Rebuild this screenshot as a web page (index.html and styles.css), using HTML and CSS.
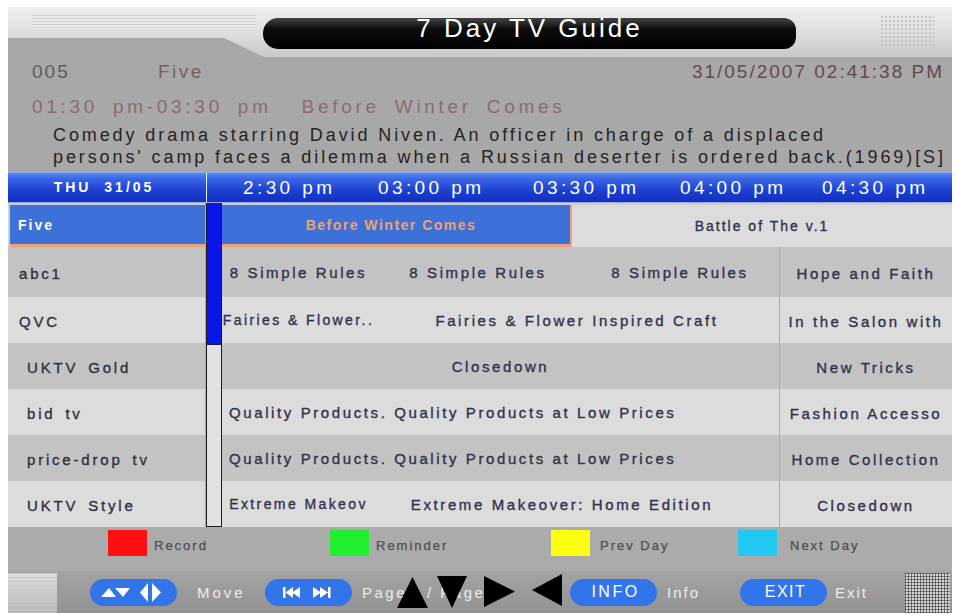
FILE: index.html
```html
<!DOCTYPE html>
<html lang="en">
<head>
<meta charset="utf-8">
<title>7 Day TV Guide</title>
<link rel="stylesheet" href="styles.css">
</head>
<body>
<div class="screen">
  <header class="top">
    <div class="top-lines"></div>
    <div class="top-cut"></div>
    <div class="top-dots"></div>
    <div class="title">7 Day TV Guide</div>
  </header>

  <section class="info">
    <div class="info-head">
      <span class="ch-num">005</span>
      <span class="ch-name">Five</span>
      <span class="clock">31/05/2007 02:41:38 PM</span>
    </div>
    <div class="prog-title">01:30 pm-03:30 pm&nbsp; Before Winter Comes</div>
    <div class="desc">Comedy drama starring David Niven. An officer in charge of a displaced<br>persons' camp faces a dilemma when a Russian deserter is ordered back.(1969)[S]</div>
  </section>

  <div class="timebar">
    <div class="day">THU 31/05</div>
    <div class="sep"></div>
    <div class="times">
      <span>2:30 pm</span>
      <span>03:00 pm</span>
      <span>03:30 pm</span>
      <span>04:00 pm</span>
      <span>04:30 pm</span>
    </div>
  </div>

  <div class="guide">
    <div class="channels">
      <div class="row first"><div class="ch-sel">Five</div></div>
      <div class="row tall dark ch">abc1</div>
      <div class="row light ch">QVC</div>
      <div class="row dark ch in">UKTV Gold</div>
      <div class="row light ch in">bid tv</div>
      <div class="row dark ch in">price-drop tv</div>
      <div class="row light ch in">UKTV Style</div>
    </div>

    <div class="scroll">
      <div class="track"><div class="thumb"></div></div>
    </div>

    <div class="programs">
      <div class="row first">
        <div class="cell on" style="width:350px">Before Winter Comes</div>
        <div class="cell light small" style="width:380px">Battle of The v.1</div>
      </div>
      <div class="row tall dark">
        <div class="cell" style="width:153px">8 Simple Rules</div>
        <div class="cell" style="width:206px">8 Simple Rules</div>
        <div class="cell" style="width:198px">8 Simple Rules</div>
        <div class="cell split" style="width:173px">Hope and Faith</div>
      </div>
      <div class="row light">
        <div class="cell narrow" style="width:153px">Fairies &amp; Flower..</div>
        <div class="cell" style="width:404px">Fairies &amp; Flower Inspired Craft</div>
        <div class="cell split" style="width:173px">In the Salon with</div>
      </div>
      <div class="row dark">
        <div class="cell" style="width:557px">Closedown</div>
        <div class="cell split" style="width:173px">New Tricks</div>
      </div>
      <div class="row light">
        <div class="cell left" style="width:557px">Quality Products. Quality Products at Low Prices</div>
        <div class="cell split" style="width:173px">Fashion Accesso</div>
      </div>
      <div class="row dark">
        <div class="cell left" style="width:557px">Quality Products. Quality Products at Low Prices</div>
        <div class="cell split" style="width:173px">Home Collection</div>
      </div>
      <div class="row light">
        <div class="cell narrow" style="width:153px">Extreme Makeov</div>
        <div class="cell shift" style="width:404px">Extreme Makeover: Home Edition</div>
        <div class="cell split" style="width:173px">Closedown</div>
      </div>
    </div>
  </div>

  <div class="legend">
    <div class="key k-red"><i class="swatch red"></i><span>Record</span></div>
    <div class="key k-green"><i class="swatch green"></i><span>Reminder</span></div>
    <div class="key k-yellow"><i class="swatch yellow"></i><span>Prev Day</span></div>
    <div class="key k-cyan"><i class="swatch cyan"></i><span>Next Day</span></div>
  </div>

  <div class="keys">
    <div class="badge-left"></div>
    <div class="pill p-move">
      <svg width="87" height="27" viewBox="0 0 87 27">
        <polygon points="11,18 19,9 26,18" fill="#fff"/>
        <polygon points="25,9 40,9 33,18" fill="#fff"/>
        <polygon points="50,13.5 58,4 58,23" fill="#fff"/>
        <polygon points="62,4 62,23 71,13.5" fill="#fff"/>
      </svg>
    </div>
    <div class="klabel l-move">Move</div>
    <div class="pill">
      <svg width="87" height="27" viewBox="0 0 87 27">
        <rect x="18" y="8" width="2.5" height="11" fill="#fff"/>
        <polygon points="20.5,13.5 28,8 28,19" fill="#fff"/>
        <polygon points="27,13.5 35,8 35,19" fill="#fff"/>
        <polygon points="48,8 56,13.5 48,19" fill="#fff"/>
        <polygon points="55,8 63,13.5 55,19" fill="#fff"/>
        <rect x="63" y="8" width="2.5" height="11" fill="#fff"/>
      </svg>
    </div>
    <div class="klabel l-page">Page&nbsp;&nbsp;&nbsp;/ Page</div>
    <div class="pill txt">INFO</div>
    <div class="klabel l-info">Info</div>
    <div class="pill txt exit">EXIT</div>
    <div class="klabel l-exit">Exit</div>
    <div class="badge-right"></div>

    <svg class="tri t-up" width="31" height="31" viewBox="0 0 31 31"><polygon points="15.5,0 31,31 0,31" fill="#000"/></svg>
    <svg class="tri t-down" width="30" height="32" viewBox="0 0 30 32"><polygon points="0,0 30,0 15,32" fill="#000"/></svg>
    <svg class="tri t-right" width="31" height="31" viewBox="0 0 31 31"><polygon points="0,0 31,15.5 0,31" fill="#000"/></svg>
    <svg class="tri t-left" width="30" height="32" viewBox="0 0 30 32"><polygon points="30,0 30,32 0,16" fill="#000"/></svg>
  </div>
</div>
</body>
</html>
```

FILE: styles.css
```css
* { box-sizing: border-box; margin: 0; padding: 0; }

body {
  background: #fff;
  font-family: "Liberation Sans", Arial, sans-serif;
}

.screen {
  position: relative;
  width: 944px;
  height: 606px;
  margin: 7px 0 0 8px;
  display: flex;
  flex-direction: column;
  background: #a8a8a8;
  overflow: hidden;
}

/* ---------- header ---------- */
.top {
  position: relative;
  flex: none;
  height: 50px;
  padding: 11px 0 0 255px;
  background: linear-gradient(#eeeeee, #dddddd 55%, #c8c8c8);
}
.top-lines {
  position: absolute;
  left: 24px;
  top: 8px;
  width: 224px;
  height: 14px;
  background: repeating-linear-gradient(#d0d0d0 0 1px, #ebebeb 1px 3px);
}
.top-cut {
  position: absolute;
  left: 0;
  top: 31px;
  width: 256px;
  height: 19px;
  background: #a8a8a8;
  clip-path: polygon(0 0, 216px 0, 256px 19px, 0 19px);
}
.top-dots {
  position: absolute;
  left: 872px;
  top: 8px;
  width: 54px;
  height: 32px;
  background-image: radial-gradient(circle, #c4c4c4 1px, transparent 1.5px);
  background-size: 4px 4px;
}
.title {
  position: relative;
  width: 533px;
  height: 31px;
  border-radius: 15px 12px 12px 15px;
  background: linear-gradient(#444 0, #0c0c0c 35%, #000 100%);
  color: #fff;
  font-size: 26px;
  line-height: 20px;
  letter-spacing: 3px;
  text-align: center;
}

/* ---------- programme info ---------- */
.info {
  flex: none;
  height: 115px;
  padding: 4px 8px 0 24px;
  background: #a8a8a8;
}
.info-head {
  display: flex;
  height: 22px;
  line-height: 22px;
  font-size: 19px;
  letter-spacing: 2px;
  color: #675859;
}
.ch-num { width: 126px; }
.ch-name { color: #765f62; letter-spacing: 2.5px; }
.clock { margin-left: auto; color: #65494f; letter-spacing: 2px; }
.prog-title {
  margin-top: 12px;
  height: 24px;
  line-height: 24px;
  font-size: 19px;
  letter-spacing: 3.7px;
  word-spacing: 6px;
  color: #8b6b6e;
  white-space: nowrap;
}
.desc {
  margin: 5px 0 0 21px;
  font-size: 18px;
  line-height: 22px;
  letter-spacing: 2.9px;
  color: #242424;
  white-space: nowrap;
}

/* ---------- time bar ---------- */
.timebar {
  flex: none;
  height: 31px;
  display: flex;
  color: #fff;
  border-top: 1px solid #8fb0f4;
  border-bottom: 1px solid #9aa8e6;
  background: linear-gradient(#5d88ef 0, #3a66e6 20%, #1c40d0 60%, #1230c0 100%);
}
.day {
  width: 198px;
  padding-right: 6px;
  text-align: center;
  font-size: 14px;
  font-weight: bold;
  letter-spacing: 3px;
  word-spacing: 6px;
  line-height: 29px;
}
.sep { width: 1px; background: #e6ecff; }
.times {
  flex: 1;
  display: grid;
  grid-template-columns: 135px 155px 147px 142px 1fr;
  padding-left: 36px;
  font-size: 19px;
  letter-spacing: 3.4px;
  line-height: 29px;
  white-space: nowrap;
}

/* ---------- guide grid ---------- */
.guide {
  flex: none;
  height: 324px;
  display: flex;
}
.channels { width: 197px; }
.programs { width: 730px; }

.row {
  display: flex;
  align-items: center;
  height: 46px;
}
.row.first {
  height: 44px;
  padding-top: 2px;
  align-items: stretch;
  background: #cfcfcf;
}
.row.tall { height: 50px; }
.dark { background: #c3c3c3; }
.light { background: #dcdcdc; }

.channels .row.first { padding-left: 2px; }
.ch-sel {
  flex: 1;
  display: flex;
  align-items: center;
  padding-left: 8px;
  background: #3b71d8;
  border-bottom: 3px solid #eea076;
  color: #fff;
  font-size: 14px;
  font-weight: bold;
  letter-spacing: 2px;
}
.ch {
  padding: 3px 0 0 11px;
  font-size: 15px;
  letter-spacing: 2.8px;
  word-spacing: 3px;
  color: #30303f;
  -webkit-text-stroke: 0.35px #30303f;
}
.ch.in { padding-left: 19px; }

.scroll { width: 17px; padding-left: 1px; }
.track {
  width: 16px;
  height: 324px;
  border: 1px solid #1d1d1d;
  border-top: none;
  background: #e2e2e2;
}
.thumb {
  height: 142px;
  background: #0a16e8;
  border-bottom: 1px solid #1a1a40;
}

.cell {
  height: 100%;
  display: flex;
  align-items: center;
  justify-content: center;
  overflow: hidden;
  white-space: nowrap;
  font-size: 15px;
  letter-spacing: 2.6px;
  color: #32324c;
  -webkit-text-stroke: 0.35px #32324c;
}
.cell.left { justify-content: flex-start; padding-left: 7px; }
.cell.narrow { font-size: 14px; letter-spacing: 2.4px; }
.cell.shift { padding-right: 30px; }
.cell.split { border-left: 1px solid #acacac; padding-top: 2px; }
.cell.small { font-size: 14px; letter-spacing: 2px; }
.cell.on {
  background: #3b71d8;
  color: #f3a06a;
  -webkit-text-stroke: 0;
  font-size: 14px;
  font-weight: bold;
  letter-spacing: 1.5px;
  border-right: 2px solid #eea076;
  border-bottom: 3px solid #eea076;
  padding-right: 10px;
}

/* ---------- colour key legend ---------- */
.legend {
  flex: none;
  height: 44px;
  display: flex;
  padding: 3px 0 0 100px;
  background: #ababab;
}
.key { display: flex; gap: 7px; }
.k-red { width: 222px; }
.k-green { width: 221px; }
.k-yellow { width: 187px; gap: 10px; }
.k-cyan { gap: 13px; }
.swatch { display: block; width: 39px; height: 26px; }
.red { background: #ff1010; }
.green { background: #22ee30; }
.yellow { background: #ffff10; }
.cyan { background: #20c8f2; }
.key span {
  font-size: 13px;
  line-height: 32px;
  letter-spacing: 2px;
  color: #4e4e4e;
  -webkit-text-stroke: 0.25px #4e4e4e;
}

/* ---------- remote key bar ---------- */
.keys {
  position: relative;
  flex: 1;
  display: flex;
  align-items: center;
  background: linear-gradient(#a4a4a4, #929292);
}
.badge-left {
  width: 49px;
  height: 40px;
  margin-top: 1px;
  background:
    repeating-linear-gradient(#c8c8c8 0 1px, transparent 1px 4px),
    linear-gradient(#dedede, #b6b6b6);
}
.badge-right {
  width: 45px;
  height: 40px;
  margin: 1px 0 0 0;
  background:
    repeating-linear-gradient(90deg, rgba(30,30,30,.55) 0 1px, transparent 1px 3px),
    repeating-linear-gradient(rgba(30,30,30,.5) 0 1px, transparent 1px 3px),
    #d6d6d6;
}
.pill {
  width: 87px;
  height: 27px;
  border-radius: 14px;
  background: #3274ea;
  display: flex;
  align-items: center;
  justify-content: center;
}
.p-move { margin-left: 33px; }
.pill.txt {
  color: #fff;
  font-size: 16px;
  letter-spacing: 2.5px;
  padding-left: 4px;
}
.pill.exit { letter-spacing: 1.5px; }
.klabel {
  font-size: 15px;
  letter-spacing: 2.5px;
  color: #ececec;
  white-space: nowrap;
}
.l-move { width: 88px; padding-left: 20px; letter-spacing: 3px; }
.l-page { width: 218px; padding-left: 10px; }
.l-info { width: 83px; padding-left: 10px; letter-spacing: 2px; }
.l-exit { width: 78px; padding-left: 8px; letter-spacing: 2px; }

.tri { position: absolute; }
.t-up { left: 389px; top: 6px; }
.t-down { left: 429px; top: 5px; }
.t-right { left: 476px; top: 5px; }
.t-left { left: 524px; top: 3px; }
```
